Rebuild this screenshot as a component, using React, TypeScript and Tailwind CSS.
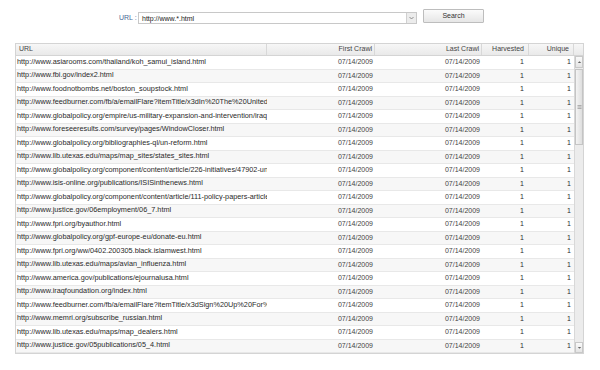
import React from "react";

const urls = [
  "http://www.asiarooms.com/thailand/koh_samui_island.html",
  "http://www.fbi.gov/index2.html",
  "http://www.foodnotbombs.net/boston_soupstock.html",
  "http://www.feedburner.com/fb/a/emailFlare?itemTitle/x3dIn%20The%20United%20States",
  "http://www.globalpolicy.org/empire/us-military-expansion-and-intervention/iraq.html",
  "http://www.foreseeresults.com/survey/pages/WindowCloser.html",
  "http://www.globalpolicy.org/bibliographies-ql/un-reform.html",
  "http://www.lib.utexas.edu/maps/map_sites/states_sites.html",
  "http://www.globalpolicy.org/component/content/article/226-initiatives/47902-un.html",
  "http://www.isis-online.org/publications/ISISinthenews.html",
  "http://www.globalpolicy.org/component/content/article/111-policy-papers-articles.html",
  "http://www.justice.gov/06employment/06_7.html",
  "http://www.fpri.org/byauthor.html",
  "http://www.globalpolicy.org/gpf-europe-eu/donate-eu.html",
  "http://www.fpri.org/ww/0402.200305.black.islamwest.html",
  "http://www.lib.utexas.edu/maps/avian_influenza.html",
  "http://www.america.gov/publications/ejournalusa.html",
  "http://www.iraqfoundation.org/index.html",
  "http://www.feedburner.com/fb/a/emailFlare?itemTitle/x3dSign%20Up%20For%20Updates",
  "http://www.memri.org/subscribe_russian.html",
  "http://www.lib.utexas.edu/maps/map_dealers.html",
  "http://www.justice.gov/05publications/05_4.html",
];

const font = { fontFamily: '"Liberation Sans", Arial, sans-serif' };

export default function App() {
  return (
    <div className="w-[600px] h-[370px] bg-white text-[7px] text-[#2a2a2a] antialiased" style={font}>
      <div className="h-[43px] pt-[9px] flex items-start">
        <div className="w-[119px]" />
        <div className="mt-[3px] h-[12px] flex items-center text-[#4a6896] w-[19px]">URL :</div>
        <div className="mt-[3px] w-[279px] h-[12px] border border-[#c8c8c8] bg-white flex">
          <div className="flex-1 flex items-center pl-[3px] text-[#222] leading-none">http://www.*.html</div>
          <div className="w-[10px] h-full bg-[#ececec] border-l border-[#d0d0d0] flex items-center justify-center">
            <svg width="5" height="4" viewBox="0 0 5 4">
              <path d="M0.5 1 L2.5 3 L4.5 1" fill="none" stroke="#777" strokeWidth="0.8" />
            </svg>
          </div>
        </div>
        <div className="ml-[6px] w-[61px] h-[14px] border border-[#bdbdbd] bg-gradient-to-b from-[#fbfbfb] to-[#e6e6e6] rounded-[1px] flex items-center justify-center text-[#333]">
          Search
        </div>
      </div>
      <div className="ml-[15px] w-[569px] border border-[#d4d4d4]">
        <div className="flex h-[12px] bg-gradient-to-b from-[#f7f7f7] to-[#e9e9e9] border-b border-[#d4d4d4] text-[#444]">
          <div className="w-[251px] border-r border-[#d8d8d8] flex items-center pl-[3px]">URL</div>
          <div className="w-[108px] border-r border-[#d8d8d8] flex items-center justify-end pr-[2px]">First Crawl</div>
          <div className="w-[107px] border-r border-[#d8d8d8] flex items-center justify-end pr-[2px]">Last Crawl</div>
          <div className="w-[47px] border-r border-[#d8d8d8] flex items-center justify-end pr-[4px]">Harvested</div>
          <div className="w-[45px] border-r border-[#d8d8d8] flex items-center justify-end pr-[4px]">Unique</div>
          <div className="flex-1" />
        </div>
        <div className="flex">
          <div className="w-[558px]">
            {urls.map((u, i) => (
              <div
                key={i}
                className={`flex h-[13.5px] border-b border-[#e8e8e8] ${i % 2 === 1 ? "bg-[#f7f7f7]" : "bg-white"}`}
              >
                <div className="w-[251px] overflow-hidden whitespace-nowrap flex items-center pl-[1px] text-[7.3px]">{u}</div>
                <div className="w-[108px] flex items-center justify-end pr-[2px] text-[#444]">07/14/2009</div>
                <div className="w-[107px] flex items-center justify-end pr-[2px] text-[#444]">07/14/2009</div>
                <div className="w-[47px] flex items-center justify-end pr-[5px]">1</div>
                <div className="w-[45px] flex items-center justify-end pr-[3px]">1</div>
              </div>
            ))}
          </div>
          <div className="flex-1 bg-[#ececec] border-l border-[#d8d8d8] flex flex-col">
            <div className="h-[12px] border border-[#c8c8c8] bg-gradient-to-b from-[#fafafa] to-[#e4e4e4] flex items-center justify-center">
              <svg width="5" height="4" viewBox="0 0 5 4">
                <path d="M0.8 3 L2.5 1.2 L4.2 3 Z" fill="#666" />
              </svg>
            </div>
            <div className="h-[76px] mt-[1px] border border-[#c4c4c4] bg-gradient-to-r from-[#f4f4f4] to-[#dedede] flex items-center justify-center">
              <svg width="5" height="4" viewBox="0 0 5 4">
                <path d="M0.5 0.5 H4.5 M0.5 2 H4.5 M0.5 3.5 H4.5" stroke="#888" strokeWidth="0.6" />
              </svg>
            </div>
            <div className="flex-1" />
            <div className="h-[11px] border border-[#c8c8c8] bg-gradient-to-b from-[#fafafa] to-[#e4e4e4] flex items-center justify-center">
              <svg width="5" height="4" viewBox="0 0 5 4">
                <path d="M0.8 1 L2.5 2.8 L4.2 1 Z" fill="#666" />
              </svg>
            </div>
          </div>
        </div>
      </div>
    </div>
  );
}
